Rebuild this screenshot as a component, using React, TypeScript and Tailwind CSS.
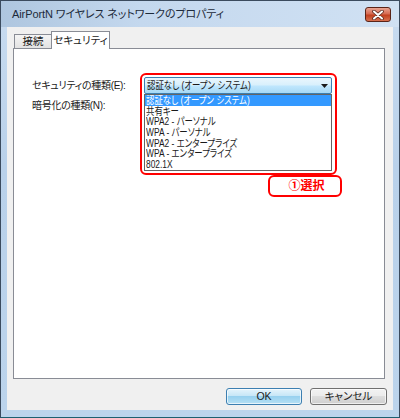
import React from 'react';

const font = { fontFamily: '"Liberation Sans", "Noto Sans CJK JP", sans-serif' };

const securityTypes = [
  '認証なし (オープン システム)',
  '共有キー',
  'WPA2 - パーソナル',
  'WPA - パーソナル',
  'WPA2 - エンタープライズ',
  'WPA - エンタープライズ',
  '802.1X',
];

const CloseButton: React.FC = () => (
  <div className="w-[26px] h-[15px] rounded-[3px] border border-[#5a2418] bg-[linear-gradient(to_bottom,#e9a593_0%,#d66a52_45%,#c2401f_55%,#d7704f_100%)] flex items-center justify-center">
    <svg width="12" height="10" viewBox="0 0 12 10">
      <path d="M2 1.5 L10 8.5 M10 1.5 L2 8.5" stroke="#5a2a20" strokeWidth="3.6" strokeLinecap="round" />
      <path d="M2 1.5 L10 8.5 M10 1.5 L2 8.5" stroke="#ffffff" strokeWidth="2" strokeLinecap="round" />
    </svg>
  </div>
);

// narrow dialog font used inside the combo box and its list
const Narrow: React.FC<{ children: React.ReactNode }> = ({ children }) => (
  <span className="inline-block origin-left scale-x-[0.8]">{children}</span>
);

const App: React.FC = () => {
  return (
    <div
      className="relative w-[400px] h-[418px] border border-[#3b4b5e] border-b-[#1d5f70] bg-[linear-gradient(to_bottom,#c9dcf0,#b9d1ea_40%,#bcd4ec)] flex flex-col text-[#1a1a1a] overflow-hidden whitespace-nowrap [font-feature-settings:'palt']"
      style={font}
    >
      {/* Title bar */}
      <div className="h-[26px] flex items-center justify-between pl-[11px] pr-[8px] pt-[1px] bg-[linear-gradient(to_right,#aec6df,#c4d8ee_35%,#d0e1f3)]">
        <span className="text-[11px] tracking-[-0.1px] text-[#1c2a3a]">AirPortN ワイヤレス ネットワークのプロパティ</span>
        <CloseButton />
      </div>

      {/* Client area */}
      <div className="ml-[6px] w-[386px] h-[383px] bg-[#f0f0f0] flex flex-col text-[10px]">
        {/* Tabs */}
        <div className="mt-[4px] ml-[7px] h-[17px] flex items-end relative z-10">
          <div className="h-[14px] w-[37px] border border-[#898c95] border-b-0 border-r-0 bg-[linear-gradient(to_bottom,#f5f5f5,#e2e2e2)] flex items-center justify-center text-[10.5px] leading-none">
            接続
          </div>
          <div className="h-[18px] -mb-px w-[59px] border border-[#898c95] border-b-0 bg-white flex items-start justify-center pt-[3px] text-[10.5px] leading-none">
            セキュリティ
          </div>
        </div>

        {/* Tab panel */}
        <div className="ml-[6px] w-[372px] h-[331px] bg-white border border-[#898c95] flex pt-[28px] pl-[18px]">
          <div className="w-[112px] flex flex-col tracking-[-0.3px]">
            <div className="h-[17px] flex items-center">セキュリティの種類(E):</div>
            <div className="mt-[3px] h-[17px] flex items-center">暗号化の種類(N):</div>
          </div>
          <div className="w-[188px] flex flex-col text-[10.5px]">
            <div className="h-[17px] border border-[#3c7fb1] rounded-[2px] bg-[linear-gradient(to_bottom,#eaf6fd_0%,#d9f0fc_45%,#bee6fd_55%,#a7d9f5_100%)] flex items-center justify-between pl-[2px] pr-[3px]">
              <span className="leading-none">
                <Narrow>{securityTypes[0]}</Narrow>
              </span>
              <svg width="7" height="4" viewBox="0 0 7 4">
                <path d="M0 0 H7 L3.5 4 Z" fill="#1a1a1a" />
              </svg>
            </div>
            <div className="border border-[#646464] bg-white">
              {securityTypes.map((item, i) => (
                <div
                  key={item}
                  className={
                    i === 0
                      ? 'h-[10.7px] leading-[10.7px] pl-[1px] bg-[#3399ff] text-white'
                      : 'h-[10.7px] leading-[10.7px] pl-[1px]'
                  }
                >
                  <Narrow>{item}</Narrow>
                </div>
              ))}
            </div>
          </div>
        </div>

        {/* Buttons */}
        <div className="mt-[9px] pr-[6px] flex justify-end gap-[8px] text-[10.5px]">
          <button className="w-[76px] h-[17px] rounded-[3px] border border-[#3c7fb1] bg-[linear-gradient(to_bottom,#e5f4fc_0%,#c4e5f6_50%,#98d1ef_50%,#b6e0f4_100%)] shadow-[inset_0_0_0_1px_#ffffffaa] leading-none">
            OK
          </button>
          <button className="w-[77px] h-[17px] rounded-[3px] border border-[#707070] bg-[linear-gradient(to_bottom,#f2f2f2_0%,#ebebeb_50%,#dddddd_50%,#cfcfcf_100%)] shadow-[inset_0_0_0_1px_#ffffffaa] leading-none">
            キャンセル
          </button>
        </div>
      </div>

      {/* Annotation: highlighted dropdown */}
      <div className="absolute left-[139px] top-[72px] w-[197px] h-[102px] border-2 border-[#ff0000] rounded-[6px] pointer-events-none" />
      <div className="absolute left-[267px] top-[174px] w-[74px] h-[22px] border-2 border-[#ff0000] rounded-[6px] bg-white flex items-center justify-center pl-[3px] text-[12px] font-bold text-[#ff0000]">
        ①選択
      </div>
    </div>
  );
};

export default App;
